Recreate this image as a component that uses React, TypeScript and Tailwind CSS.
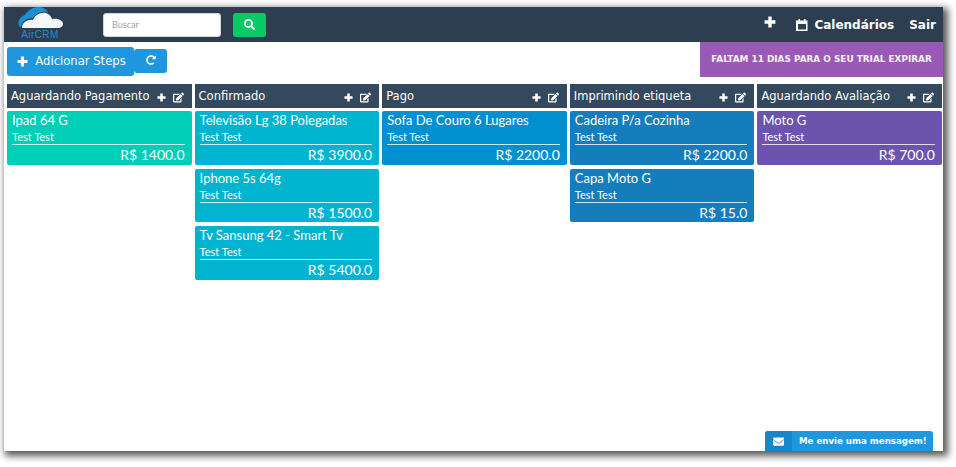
import { FaEnvelope, FaRedoAlt, FaSearch, FaEdit } from 'react-icons/fa';

interface Deal {
  title: string;
  price: string;
}

interface Step {
  title: string;
  color: string;
  deals: Deal[];
}

const steps: Step[] = [
  {
    title: 'Aguardando Pagamento',
    color: 'bg-[#00cfb8]',
    deals: [{ title: 'Ipad 64 G', price: 'R$ 1400.0' }],
  },
  {
    title: 'Confirmado',
    color: 'bg-[#00b4d0]',
    deals: [
      { title: 'Televisão Lg 38 Polegadas', price: 'R$ 3900.0' },
      { title: 'Iphone 5s 64g', price: 'R$ 1500.0' },
      { title: 'Tv Sansung 42 - Smart Tv', price: 'R$ 5400.0' },
    ],
  },
  {
    title: 'Pago',
    color: 'bg-[#0090d0]',
    deals: [{ title: 'Sofa De Couro 6 Lugares', price: 'R$ 2200.0' }],
  },
  {
    title: 'Imprimindo etiqueta',
    color: 'bg-[#167dbc]',
    deals: [
      { title: 'Cadeira P/a Cozinha', price: 'R$ 2200.0' },
      { title: 'Capa Moto G', price: 'R$ 15.0' },
    ],
  },
  {
    title: 'Aguardando Avaliação',
    color: 'bg-[#6c53ae]',
    deals: [{ title: 'Moto G', price: 'R$ 700.0' }],
  },
];

function PlusIcon({ size, className }: { size: number; className?: string }) {
  return (
    <svg width={size} height={size} viewBox="0 0 10 10" fill="currentColor" className={className}>
      <path d="M3.6 0.5h2.8v3.1h3.1v2.8h-3.1v3.1h-2.8v-3.1h-3.1v-2.8h3.1z" />
    </svg>
  );
}

function CalendarIcon() {
  return (
    <svg width="12" height="12" viewBox="0 0 12 12" fill="currentColor" className="ml-[20px]">
      <path d="M2.5 0h1.5v1.5h4v-1.5h1.5v1.5h2v10.5h-11.5v-10.5h2.5zM2 5v5.5h8v-5.5z" />
    </svg>
  );
}

function Logo() {
  return (
    <div className="-mt-[3px] flex w-[46px] flex-col items-center">
      <svg width="45" height="22" viewBox="0 0 45 22">
        <path d="M1 19C-1 14 3 9 7 8C10 3 15 0 20 0C25 0 28 2 30 5C24 4 18 6 15 11C10 11 5 13 3 20Z" fill="#1b8fd6" />
        <path d="M4 21C4 16 9 12 15 13C17 8 22 5 28 6C31 7 33 9 34 12C39 11 45 13 45 17C45 19 43 21 40 21Z" fill="#f4f7fa" />
      </svg>
      <span className="mt-[1px] font-['Liberation_Sans',sans-serif] text-[10px] leading-[10px] tracking-[0.4px] text-[#1b8fd6]">AirCRM</span>
    </div>
  );
}

function DealCard({ deal, color }: { deal: Deal; color: string }) {
  return (
    <div className={`h-[53.5px] rounded-[2px] pl-[5px] pr-[7px] text-white ${color}`}>
      <div className="font-['Lato',sans-serif] text-[13px] leading-[18px]">{deal.title}</div>
      <div className="mt-[1px] border-b border-white/80 pb-[1px] font-['Lato',sans-serif] text-[11px] leading-[13px]">Test Test</div>
      <div className="text-right font-['Lato',sans-serif] text-[14px] leading-[19px]">{deal.price}</div>
    </div>
  );
}

function StepColumn({ step }: { step: Step }) {
  return (
    <div className="flex flex-col gap-[3px]">
      <div className="flex h-[24px] items-center justify-between bg-[#34495e] pl-[4px] pr-[8px] text-white">
        <span className="whitespace-nowrap pt-[1px] font-['DejaVu_Sans',sans-serif] text-[11.5px]">{step.title}</span>
        <div className="flex items-center gap-[7px] pt-[3px]">
          <PlusIcon size={9} />
          <FaEdit size={11} />
        </div>
      </div>
      <div className="flex flex-col gap-[4px]">
        {step.deals.map((deal) => (
          <DealCard key={deal.title} deal={deal} color={step.color} />
        ))}
      </div>
    </div>
  );
}

export default function App() {
  return (
    <div className="h-[467px] w-[956px] overflow-hidden bg-white pl-[4px] pt-[7px]">
      <div className="relative flex h-[444px] w-[939px] flex-col bg-white shadow-[3px_3px_7px_2px_rgba(0,0,0,0.65)]">
        {/* Navbar */}
        <div className="flex h-[35px] shrink-0 items-center bg-[#2c3e50] pl-[13px] pr-[7px] text-white">
          <Logo />
          <input
            placeholder="Buscar"
            className="ml-[40px] h-[24px] w-[118px] rounded-[3px] border border-gray-300 bg-white px-[8px] font-['Lato',sans-serif] text-[9px] placeholder:text-gray-400"
          />
          <button className="ml-[12px] flex h-[24px] w-[33px] items-center justify-center rounded-[3px] bg-[#0ac866]">
            <FaSearch size={11} />
          </button>
          <div className="ml-auto flex items-center font-['DejaVu_Sans',sans-serif] text-[12px] font-bold">
            <PlusIcon size={12} className="mb-[5px]" />
            <CalendarIcon />
            <span className="ml-[6px]">Calendários</span>
            <span className="ml-[15px]">Sair</span>
          </div>
        </div>

        {/* Toolbar */}
        <div className="flex h-[35px] shrink-0 items-start justify-between pl-[3px]">
          <div className="flex items-start pt-[5px]">
            <button className="flex h-[29px] w-[127px] items-center justify-center gap-[7px] rounded-[3px] bg-[#1e97de] pl-[2px] font-['DejaVu_Sans',sans-serif] text-[11.6px] text-white">
              <PlusIcon size={11} />
              Adicionar Steps
            </button>
            <button className="mt-[2px] flex h-[24px] w-[33px] items-center justify-center rounded-[3px] bg-[#1e97de] pb-[3px] text-white">
              <FaRedoAlt size={10} />
            </button>
          </div>
          <div className="flex h-[35px] w-[243px] items-center justify-center bg-[#9b59b6] font-['DejaVu_Sans',sans-serif] text-[8.9px] font-bold text-white/90">
            FALTAM 11 DIAS PARA O SEU TRIAL EXPIRAR
          </div>
        </div>

        {/* Board */}
        <div className="mt-[7px] grid grid-cols-5 gap-[3px] pl-[3px] pr-[1px]">
          {steps.map((step) => (
            <StepColumn key={step.title} step={step} />
          ))}
        </div>

        {/* Chat widget */}
        <div className="absolute bottom-0 right-[10px] flex h-[20px] w-[168px] overflow-hidden rounded-t-[3px] bg-[#1e97de] font-['DejaVu_Sans',sans-serif] text-[8.65px] font-bold text-white">
          <div className="flex w-[27px] items-center justify-center bg-[#1585cc]">
            <FaEnvelope size={11} />
          </div>
          <div className="flex flex-1 items-center pl-[7px]">Me envie uma mensagem!</div>
        </div>
      </div>
    </div>
  );
}
